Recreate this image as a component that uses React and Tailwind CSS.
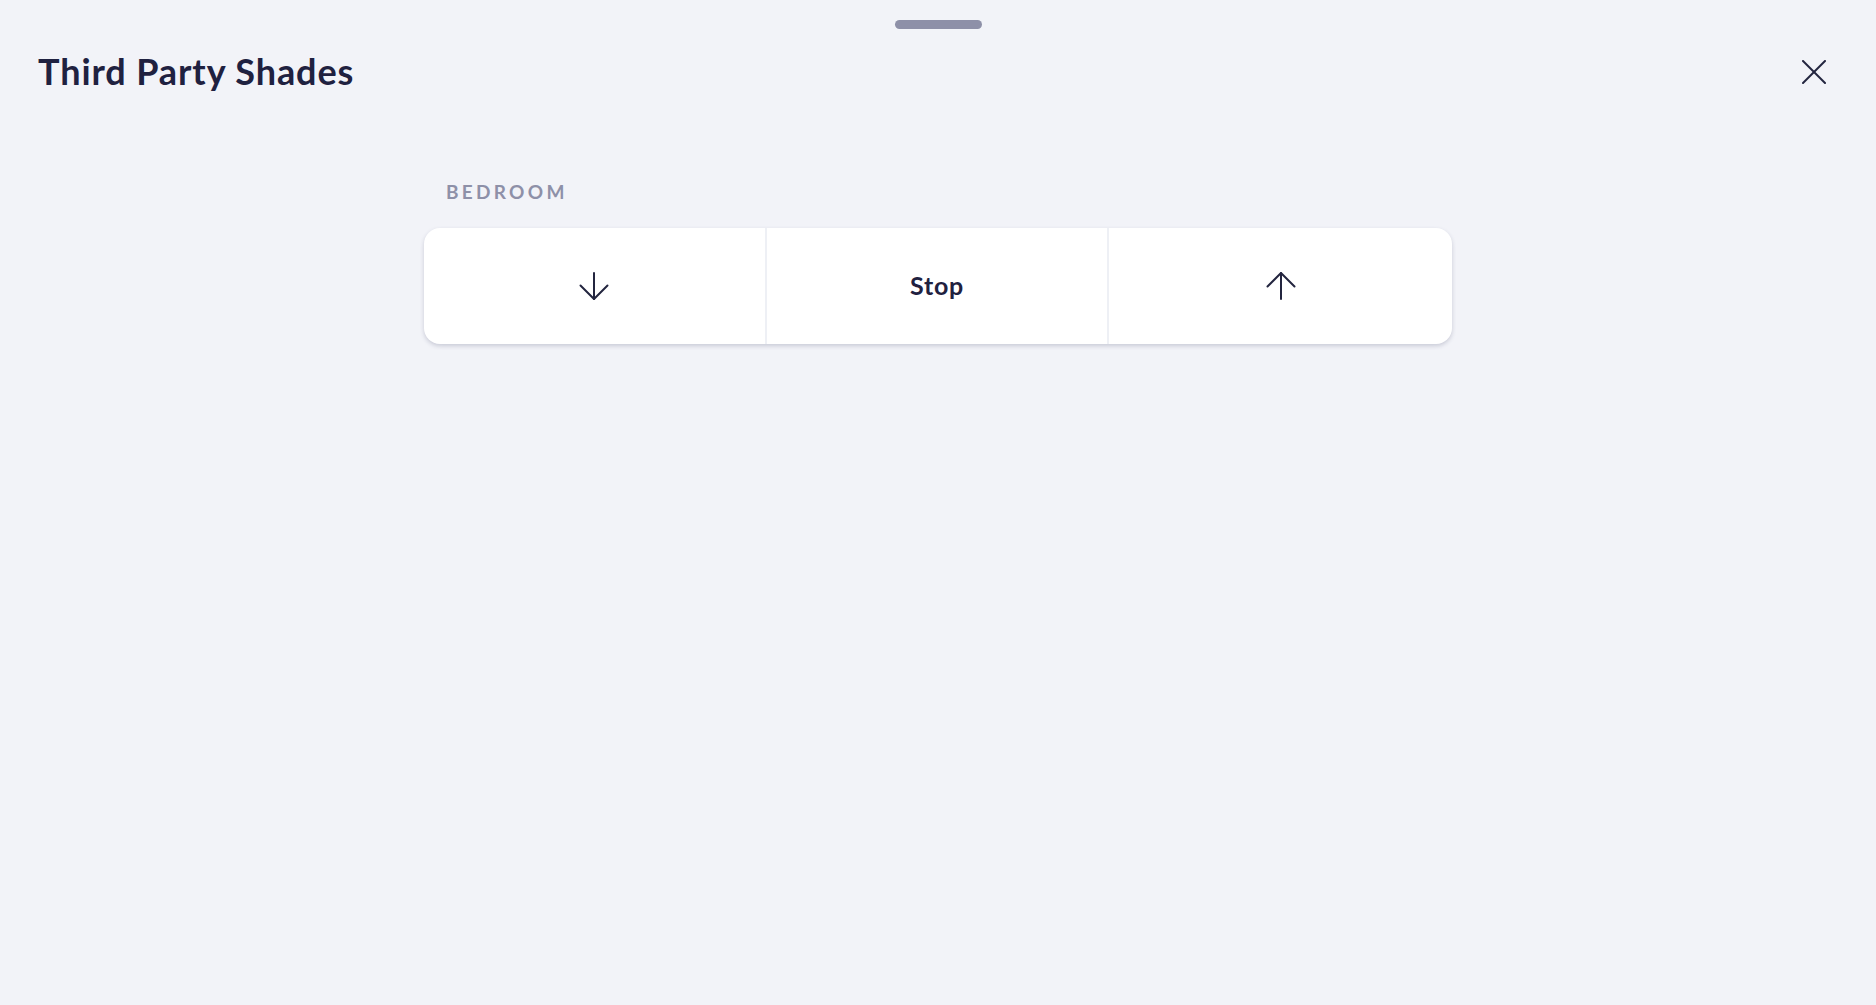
import React from "react";

const DownArrow = () => (
  <svg width="30" height="30" viewBox="0 0 30 30" fill="none" stroke="#23253f" strokeWidth="2" strokeLinecap="round" strokeLinejoin="round">
    <path d="M15 2v26" />
    <path d="M1.5 14.5L15 28l13.5-13.5" />
  </svg>
);

const UpArrow = () => (
  <svg width="30" height="30" viewBox="0 0 30 30" fill="none" stroke="#23253f" strokeWidth="2" strokeLinecap="round" strokeLinejoin="round">
    <path d="M15 28V2" />
    <path d="M1.5 15.5L15 2l13.5 13.5" />
  </svg>
);

const CloseIcon = () => (
  <svg width="24" height="24" viewBox="0 0 24 24" fill="none" stroke="#23253f" strokeWidth="2" strokeLinecap="round">
    <path d="M1 1l22 22" />
    <path d="M23 1L1 23" />
  </svg>
);

export default function App() {
  return (
    <div className="min-h-screen bg-[#f2f3f8] font-['Lato',sans-serif] text-[#1f2140]">
      {/* drag handle */}
      <div className="flex justify-center pt-[20px]">
        <div className="h-[9px] w-[87px] rounded-full bg-[#8e90a8]" />
      </div>

      {/* header */}
      <div className="mt-[21px] flex items-center justify-between pl-[38px] pr-[50px]">
        <h1 className="text-[36px] font-bold leading-[42px] tracking-[0.9px]">Third Party Shades</h1>
        <button className="mt-[1px] flex h-[24px] w-[24px] items-center justify-center">
          <CloseIcon />
        </button>
      </div>

      {/* shades group */}
      <div className="mx-auto mt-[88px] w-[1028px]">
        <p className="pl-[22px] text-[19px] font-bold uppercase leading-[24px] tracking-[3.3px] text-[#8e90a8]">Bedroom</p>
        <div className="mt-[24px] grid h-[116px] grid-cols-3 overflow-hidden rounded-[16px] bg-white shadow-[0_2px_4px_rgba(60,64,100,0.22)]">
          <button className="flex items-center justify-center border-r-2 border-[#eef0f5]">
            <DownArrow />
          </button>
          <button className="flex items-center justify-center border-r-2 border-[#eef0f5] text-[25px] font-bold tracking-[0.8px]">
            Stop
          </button>
          <button className="flex items-center justify-center">
            <UpArrow />
          </button>
        </div>
      </div>
    </div>
  );
}
